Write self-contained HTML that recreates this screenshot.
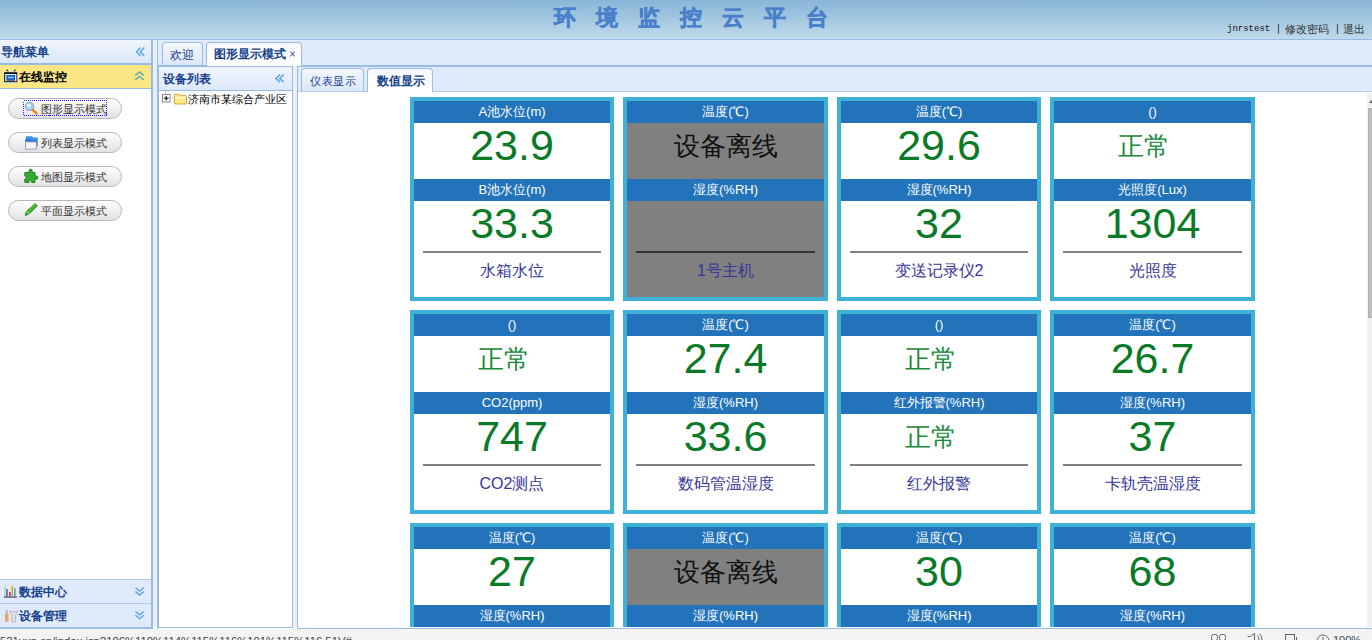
<!DOCTYPE html>
<html><head><meta charset="utf-8">
<style>
*{margin:0;padding:0;box-sizing:border-box;}
html,body{width:1372px;height:640px;overflow:hidden;background:#fff;font-family:"Liberation Sans",sans-serif;font-size:12px;}
.a{position:absolute;white-space:nowrap;}
.bl{background:#99bbe8;}
#hdr{left:0;top:0;width:1372px;height:39px;background:linear-gradient(#89b5d8,#bfdaea);}
#title{left:554px;top:3px;font-family:"Liberation Serif",serif;font-weight:900;font-size:22px;color:#4a7fc9;letter-spacing:20px;-webkit-text-stroke:0.5px #4a7fc9;}
.ul{top:22px;font-size:11px;color:#333;}
.ph{background:linear-gradient(#f0f5fd,#dce8fa);color:#15428b;font-weight:bold;font-size:12px;}
.acc{background:#dfeafc;color:#15428b;font-weight:bold;font-size:12px;}
.btn{position:absolute;left:8px;width:114px;height:21px;border:1px solid #b8b8b8;border-radius:11px;background:linear-gradient(#fefefe,#f3f3f3 40%,#e2e2e2);color:#333;font-size:11px;}
.btn span{position:absolute;left:31.5px;top:3px;}
.tab{position:absolute;border:1px solid #99bbe8;border-bottom:none;border-radius:4px 4px 0 0;background:linear-gradient(#f3f7fd,#dbe6f6);color:#15428b;font-size:12px;}
.tab span{position:absolute;}
.tab.act{background:linear-gradient(#f3f7fd,#fff 60%);font-weight:bold;}
#body{left:298px;top:92px;width:1069px;height:535px;overflow:hidden;}
/* cards */
.card{position:absolute;width:204px;height:204px;border:4px solid #3eb1d7;background:#fff;overflow:hidden;}
.hd{position:absolute;left:0;right:0;height:22px;background:#2273ba;color:#fff;font-size:13px;text-align:center;line-height:22px;}
.bd{position:absolute;left:0;right:0;background:#fff;}
.bd.g{background:#808080;}
.val{position:absolute;left:0;right:0;text-align:center;color:#0b7a28;font-size:43px;line-height:44px;margin-top:-2px;}
.vo{position:absolute;left:0;right:0;margin-top:-5px;text-align:center;color:#111;font-size:26px;line-height:56px;}
.vn{position:absolute;left:0;right:17px;margin-top:-5px;text-align:center;color:#1b8a3a;font-size:26px;line-height:56px;}
.ln{position:absolute;left:9px;right:9px;top:50px;height:2px;background:#808080;}
.bd.g .ln{background:#333;}
.lab{position:absolute;left:0;right:0;top:61px;text-align:center;color:#36369a;font-size:16px;line-height:18px;}
</style></head>
<body>
<!-- header -->
<div id="hdr" class="a"></div>
<div class="a bl" style="left:0;top:39px;width:1372px;height:1px"></div>
<div id="title" class="a">环境监控云平台</div>
<div class="a ul" style="left:1227px;top:24px;font-family:'Liberation Mono',monospace;font-size:9px;color:#111">jnrstest</div>
<div class="a ul" style="left:1277px;">|</div>
<div class="a ul" style="left:1285px;">修改密码</div>
<div class="a ul" style="left:1336px;">|</div>
<div class="a ul" style="left:1343px;">退出</div>

<!-- left panel -->
<div class="a ph" style="left:0;top:40px;width:151px;height:23px"></div>
<div class="a" style="left:1px;top:44px;color:#15428b;font-weight:bold;font-size:12px">导航菜单</div>
<div class="a bl" style="left:0;top:63px;width:151px;height:2px"></div>
<div class="a" style="left:0;top:65px;width:151px;height:23px;background:#fae784"></div>
<div class="a" style="left:19px;top:69px;color:#000;font-weight:bold;font-size:12px">在线监控</div>
<div class="a bl" style="left:0;top:88px;width:151px;height:1px"></div>
<div class="btn" style="top:98px"><span>图形显示模式</span></div>
<div class="btn" style="top:132px"><span>列表显示模式</span></div>
<div class="btn" style="top:166px"><span>地图显示模式</span></div>
<div class="btn" style="top:200px"><span>平面显示模式</span></div>
<div class="a bl" style="left:0;top:579px;width:151px;height:1px;background:#b0c8ec"></div>
<div class="a acc" style="left:0;top:580px;width:151px;height:23px"></div>
<div class="a" style="left:19px;top:584px;color:#15428b;font-weight:bold;font-size:12px">数据中心</div>
<div class="a bl" style="left:0;top:603px;width:151px;height:1px;background:#b0c8ec"></div>
<div class="a acc" style="left:0;top:604px;width:151px;height:23px"></div>
<div class="a" style="left:19px;top:608px;color:#15428b;font-weight:bold;font-size:12px">设备管理</div>
<div class="a bl" style="left:0;top:627px;width:153px;height:2px"></div>
<div class="a bl" style="left:151px;top:40px;width:2px;height:589px"></div>

<!-- splitter -->
<div class="a" style="left:153px;top:40px;width:4px;height:587px;background:#e9eef7"></div>

<!-- tab panel -->
<div class="a" style="left:157px;top:40px;width:1215px;height:25px;background:#dfebfc"></div>
<div class="a bl" style="left:157px;top:40px;width:1px;height:589px"></div>
<div class="a bl" style="left:158px;top:65px;width:1214px;height:1px"></div>
<div class="tab" style="left:162px;top:42px;width:41px;height:23px"><span style="left:7px;top:4px">欢迎</span></div>
<div class="tab act" style="left:206px;top:42px;width:96px;height:24px;"><span style="left:7px;top:3px">图形显示模式</span></div>

<!-- device list -->
<div class="a" style="left:293px;top:66px;width:4px;height:561px;background:#e9eef7"></div>
<div class="a" style="left:158px;top:66px;width:135px;height:562px;border:1px solid #99bbe8;background:#fff"></div>
<div class="a ph" style="left:159px;top:67px;width:133px;height:23px"></div>
<div class="a bl" style="left:159px;top:90px;width:133px;height:1px"></div>
<div class="a" style="left:163px;top:71px;color:#15428b;font-weight:bold;font-size:12px">设备列表</div>
<div class="a" style="left:187.5px;top:92px;color:#000;font-size:11px">济南市某综合产业区</div>

<!-- content -->
<div class="a" style="left:297px;top:66px;width:1075px;height:563px;border:1px solid #99bbe8;border-right:none;background:#fff"></div>
<div class="a" style="left:298px;top:67px;width:1074px;height:24px;background:#dfebfc"></div>
<div class="a bl" style="left:298px;top:91px;width:1074px;height:1px;background:#b5cdf0"></div>
<div class="tab" style="left:301px;top:68px;width:63px;height:23px;font-size:11px;letter-spacing:0.6px"><span style="left:8px;top:4.5px">仪表显示</span></div>
<div class="tab act" style="left:367px;top:68px;width:66px;height:24px;"><span style="left:8.5px;top:4px">数值显示</span></div>
<div id="body" class="a">
<div class="card" style="left:112px;top:5px;width:204px"><div class="hd" style="top:0">A池水位(m)</div><div class="bd" style="top:22px;height:56px"><div class="val" style="top:2px">23.9</div></div><div class="hd" style="top:78px">B池水位(m)</div><div class="bd" style="top:100px;height:96px"><div class="val" style="top:2px">33.3</div><div class="ln"></div><div class="lab">水箱水位</div></div></div>
<div class="card" style="left:325px;top:5px;width:205px"><div class="hd" style="top:0">温度(℃)</div><div class="bd g" style="top:22px;height:56px"><div class="vo" style="top:0px">设备离线</div></div><div class="hd" style="top:78px">湿度(%RH)</div><div class="bd g" style="top:100px;height:96px"><div class="ln"></div><div class="lab">1号主机</div></div></div>
<div class="card" style="left:539px;top:5px;width:204px"><div class="hd" style="top:0">温度(℃)</div><div class="bd" style="top:22px;height:56px"><div class="val" style="top:2px">29.6</div></div><div class="hd" style="top:78px">湿度(%RH)</div><div class="bd" style="top:100px;height:96px"><div class="val" style="top:2px">32</div><div class="ln"></div><div class="lab">变送记录仪2</div></div></div>
<div class="card" style="left:752px;top:5px;width:205px"><div class="hd" style="top:0">()</div><div class="bd" style="top:22px;height:56px"><div class="vn" style="top:0px">正常</div></div><div class="hd" style="top:78px">光照度(Lux)</div><div class="bd" style="top:100px;height:96px"><div class="val" style="top:2px">1304</div><div class="ln"></div><div class="lab">光照度</div></div></div>
<div class="card" style="left:112px;top:218px;width:204px"><div class="hd" style="top:0">()</div><div class="bd" style="top:22px;height:56px"><div class="vn" style="top:0px">正常</div></div><div class="hd" style="top:78px">CO2(ppm)</div><div class="bd" style="top:100px;height:96px"><div class="val" style="top:2px">747</div><div class="ln"></div><div class="lab">CO2测点</div></div></div>
<div class="card" style="left:325px;top:218px;width:205px"><div class="hd" style="top:0">温度(℃)</div><div class="bd" style="top:22px;height:56px"><div class="val" style="top:2px">27.4</div></div><div class="hd" style="top:78px">湿度(%RH)</div><div class="bd" style="top:100px;height:96px"><div class="val" style="top:2px">33.6</div><div class="ln"></div><div class="lab">数码管温湿度</div></div></div>
<div class="card" style="left:539px;top:218px;width:204px"><div class="hd" style="top:0">()</div><div class="bd" style="top:22px;height:56px"><div class="vn" style="top:0px">正常</div></div><div class="hd" style="top:78px">红外报警(%RH)</div><div class="bd" style="top:100px;height:96px"><div class="vn" style="top:0px">正常</div><div class="ln"></div><div class="lab">红外报警</div></div></div>
<div class="card" style="left:752px;top:218px;width:205px"><div class="hd" style="top:0">温度(℃)</div><div class="bd" style="top:22px;height:56px"><div class="val" style="top:2px">26.7</div></div><div class="hd" style="top:78px">湿度(%RH)</div><div class="bd" style="top:100px;height:96px"><div class="val" style="top:2px">37</div><div class="ln"></div><div class="lab">卡轨壳温湿度</div></div></div>
<div class="card" style="left:112px;top:431px;width:204px"><div class="hd" style="top:0">温度(℃)</div><div class="bd" style="top:22px;height:56px"><div class="val" style="top:2px">27</div></div><div class="hd" style="top:78px">湿度(%RH)</div><div class="bd" style="top:100px;height:96px"><div class="ln"></div><div class="lab"></div></div></div>
<div class="card" style="left:325px;top:431px;width:205px"><div class="hd" style="top:0">温度(℃)</div><div class="bd g" style="top:22px;height:56px"><div class="vo" style="top:0px">设备离线</div></div><div class="hd" style="top:78px">湿度(%RH)</div><div class="bd g" style="top:100px;height:96px"><div class="ln"></div><div class="lab"></div></div></div>
<div class="card" style="left:539px;top:431px;width:204px"><div class="hd" style="top:0">温度(℃)</div><div class="bd" style="top:22px;height:56px"><div class="val" style="top:2px">30</div></div><div class="hd" style="top:78px">湿度(%RH)</div><div class="bd" style="top:100px;height:96px"><div class="ln"></div><div class="lab"></div></div></div>
<div class="card" style="left:752px;top:431px;width:205px"><div class="hd" style="top:0">温度(℃)</div><div class="bd" style="top:22px;height:56px"><div class="val" style="top:2px">68</div></div><div class="hd" style="top:78px">湿度(%RH)</div><div class="bd" style="top:100px;height:96px"><div class="ln"></div><div class="lab"></div></div></div>
</div>
<div class="a" style="left:1367px;top:93px;width:5px;height:534px;background:#f0f0f0"></div>
<div class="a" style="left:1368px;top:108px;width:4px;height:210px;background:#bdbdbd;border-left:1px solid #b0b0b0;border-top:1px solid #b0b0b0;border-bottom:1px solid #b0b0b0"></div>

<!-- status -->
<div class="a" style="left:0;top:629px;width:1372px;height:11px;background:#f3f3f3;overflow:hidden">
<div class="a" style="left:0;top:6px;font-size:11.3px;color:#444">521yun.cn/index.jsp?106%110%114%115%116%101%115%116.51V#</div>
<div class="a" style="left:1333px;top:5px;font-size:11px;color:#345">100%</div></div>
<svg class="a" style="left:0;top:0;pointer-events:none" width="1372" height="640">
<!-- nav collapse -->
<path d="M140.5 47.5L136.5 51.7L140.5 55.9M144.3 47.5L140.3 51.7L144.3 55.9" fill="none" stroke="#5aa5e6" stroke-width="1.5"/>
<!-- device collapse -->
<path d="M280 74.5L276 78.4L280 82.3M283.8 74.5L279.8 78.4L283.8 82.3" fill="none" stroke="#5aa5e6" stroke-width="1.5"/>
<!-- up chevrons -->
<path d="M135.2 75.5L139.5 72L143.8 75.5M135.2 80L139.5 76.5L143.8 80" fill="none" stroke="#5aaab8" stroke-width="1.4"/>
<!-- down chevrons -->
<path d="M135.5 587.8L139.6 591.2L143.7 587.8M135.5 591.6L139.6 595L143.7 591.6" fill="none" stroke="#5aa5e6" stroke-width="1.4"/>
<path d="M135.5 611.5L139.6 614.9L143.7 611.5M135.5 615.3L139.6 618.7L143.7 615.3" fill="none" stroke="#5aa5e6" stroke-width="1.4"/>
<!-- TV icon -->
<rect x="4" y="72.5" width="13.5" height="10.5" rx="1.2" fill="#8fc4f0"/>
<rect x="4.2" y="72.2" width="13" height="9.8" fill="#111"/>
<rect x="5.2" y="74" width="11.2" height="7.2" fill="#e8f4ff"/>
<rect x="6.6" y="75" width="8.4" height="5.6" fill="#111"/>
<rect x="7.2" y="75.2" width="7.4" height="4.6" fill="#1f78e8"/>
<rect x="8" y="76.8" width="6" height="1.2" fill="#7ec0ff"/>
<path d="M7.3 70.2L8.8 72.2M14.8 70.2L13.3 72.2" stroke="#4aa0e0" stroke-width="1"/>
<circle cx="7.2" cy="70.3" r="0.9" fill="#1a3a80"/><circle cx="14.9" cy="70.3" r="0.9" fill="#1a3a80"/>
<!-- focus rect -->
<rect x="23.5" y="100.5" width="83" height="15" fill="none" stroke="#2020ff" stroke-width="1" stroke-dasharray="1 1" shape-rendering="crispEdges"/>
<!-- magnifier -->
<path d="M32.6 109.6L36.4 113.4" stroke="#e08a10" stroke-width="2.6" stroke-linecap="round"/>
<circle cx="29.5" cy="106.4" r="4.1" fill="#a8d4f8" stroke="#8f9aa6" stroke-width="1"/>
<circle cx="28.8" cy="105.6" r="2" fill="#dff0ff"/>
<!-- folder -->
<path d="M26 136.2H32L33 137.6H37.8V146H26Z" fill="#3c8ee6"/>
<path d="M25 139.2H30.5L31.5 140.2H36.7V149.2H25Z" fill="#2f7ad8"/>
<rect x="25.6" y="142" width="10.6" height="7" fill="#f2f4f7" stroke="#9aa3ad" stroke-width="0.7"/>
<!-- puzzle -->
<path d="M26 172.5H29V170.8A1.6 1.6 0 0 1 32.2 170.8V172.5H35V176H36.3A1.6 1.6 0 0 1 36.3 179.2H35V182.5H31.5V181.3A1.3 1.3 0 0 0 29 181.3V182.5H24.8V179A1.5 1.5 0 0 0 24.8 176V172.5Z" fill="#36a832" stroke="#17801a" stroke-width="0.9"/>
<!-- pencil -->
<path d="M25.2 215.4L26.3 211.6L34.8 203.3L37.4 205.9L28.9 214.2Z" fill="#3cb830" stroke="#1d7a1a" stroke-width="0.8"/>
<path d="M26.8 211.2L29.3 213.7" stroke="#e8e0b0" stroke-width="1"/>
<path d="M29 209.2L35.6 202.8" stroke="#9fe070" stroke-width="0.8"/>
<!-- chart -->
<rect x="4.3" y="586.2" width="1.3" height="10.5" fill="#c0c4c8"/>
<rect x="6.2" y="589" width="1.4" height="7.6" fill="#3c5a66"/>
<rect x="9" y="592" width="1.6" height="4.6" fill="#8a3ab0"/>
<rect x="11.4" y="586" width="1.6" height="10.6" fill="#f5a000"/>
<rect x="14" y="588.2" width="1.6" height="8.4" fill="#2ea6e8"/>
<rect x="4" y="596.6" width="13" height="1" fill="#333"/>
<!-- tools -->
<rect x="5" y="613.8" width="3.5" height="8" rx="0.8" fill="#f0a070"/>
<rect x="5.8" y="610.2" width="2" height="4" fill="#b8b8b8"/>
<path d="M10.3 610.3V613L11.8 614.6V621.8H15.6V614.6L17.2 613V610.3L15.8 611.8H11.7Z" fill="#e4e4e4" stroke="#aaaaaa" stroke-width="0.7"/>
<!-- tab close -->
<path d="M290.3 51.6L294.8 56.4M294.8 51.6L290.3 56.4" stroke="#5a78b0" stroke-width="1.2"/>
<!-- tree -->
<path d="M165.5 90.5V94M170 98H173" stroke="#a0a0a0" stroke-width="1" stroke-dasharray="1 1"/>
<rect x="162.5" y="94.5" width="7.5" height="7.5" fill="#fff" stroke="#8a8a8a"/>
<path d="M164 98.2H168.5M166.25 96V100.5" stroke="#000" stroke-width="1.1"/>
<path d="M174.5 95.5A1 1 0 0 1 175.5 94.2H179L180.3 95.6H185.5A1 1 0 0 1 186.5 96.6V103A1 1 0 0 1 185.5 104H175.5A1 1 0 0 1 174.5 103Z" fill="#fde88a" stroke="#d0982a" stroke-width="0.9"/>
<rect x="175.2" y="96.8" width="10.6" height="1.6" fill="#fff9c8"/>
<path d="M1369 103L1371.5 100L1374 103Z" fill="#606060"/>
<!-- status icons -->
<g fill="none" stroke="#666" stroke-width="1">
<rect x="1211.5" y="634.5" width="6" height="6" rx="2"/><rect x="1219.5" y="634.5" width="6" height="6" rx="2"/>
<path d="M1247.5 636.5H1250.5L1254.5 633.5V641M1257.5 635.5Q1259 637 1259 640M1259.5 633.5Q1262 636 1262 640"/>
<rect x="1285.5" y="634.5" width="9" height="7"/><path d="M1296.5 637V641"/>
<circle cx="1323" cy="641" r="6"/><path d="M1323 637V640"/>
</g>
</svg>
</body></html>
